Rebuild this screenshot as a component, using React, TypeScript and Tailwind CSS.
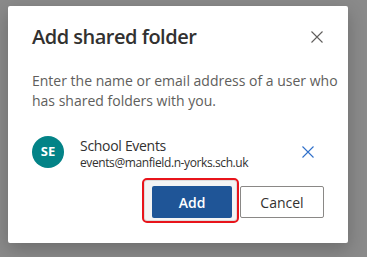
import React from "react";

function Dismiss({ className }: { className?: string }) {
  return (
    <svg className={className} width="12" height="12" viewBox="0 0 12 12" fill="none">
      <path d="M0.5 0.5 L11.5 11.5 M11.5 0.5 L0.5 11.5" stroke="currentColor" strokeWidth="1.1" />
    </svg>
  );
}

export default function App() {
  return (
    <div
      className="w-[367px] h-[257px] bg-[#8a8a8a] pt-[6px] pl-[8px] overflow-hidden"
      style={{ fontFamily: '"Open Sans", "Noto Sans", Arial, sans-serif' }}
    >
      <div className="w-[340px] h-[237px] bg-white rounded-[2px] shadow-[0_6px_18px_rgba(0,0,0,0.22)] px-6 pt-[17px] flex flex-col">
        <div className="flex items-center justify-between h-[28px]">
          <h2 className="text-[20px] leading-[28px] font-semibold text-[#323130] tracking-[-0.5px]">
            Add shared folder
          </h2>
          <button className="mr-px text-[#605e5c]">
            <Dismiss />
          </button>
        </div>
        <div className="mt-5 flex flex-col text-[14px] leading-[20px] text-[#605e5c]">
          <span className="whitespace-nowrap">Enter the name or email address of a user who</span>
          <span className="whitespace-nowrap">has shared folders with you.</span>
        </div>
        <div className="mt-[25px] flex items-center h-[32px]">
          <div className="w-8 h-8 rounded-full bg-[#038387] text-white flex items-center justify-center text-[13px] font-bold shrink-0">
            SE
          </div>
          <div className="ml-4 flex flex-col flex-1 min-w-0 pt-[2px]">
            <span className="text-[14px] leading-[19px] text-[#323130] tracking-[-0.3px]">School Events</span>
            <span className="text-[12px] leading-[16px] text-[#323130] tracking-[-0.4px]">
              events@manfield.n-yorks.sch.uk
            </span>
          </div>
          <button className="w-8 h-8 flex items-center justify-center text-[#2f6fca]">
            <Dismiss />
          </button>
        </div>
        <div className="mt-[18px] flex justify-end gap-2">
          <div className="relative">
            <div className="absolute left-[-10px] right-[-7px] top-[-8px] bottom-[-5px] border-2 border-[#e8141b] rounded-[5px] bg-[#f4f4f4] shadow-[inset_0_0_0_1px_#dcdcdc]" />
            <button className="relative h-8 min-w-[80px] px-4 bg-[#1f5597] rounded-[2px] text-white text-[14px] font-semibold">
              Add
            </button>
          </div>
          <button className="h-8 min-w-[84px] px-4 border border-[#8a8886] rounded-[2px] bg-white text-[#323130] text-[14px] font-medium">
            Cancel
          </button>
        </div>
      </div>
    </div>
  );
}
